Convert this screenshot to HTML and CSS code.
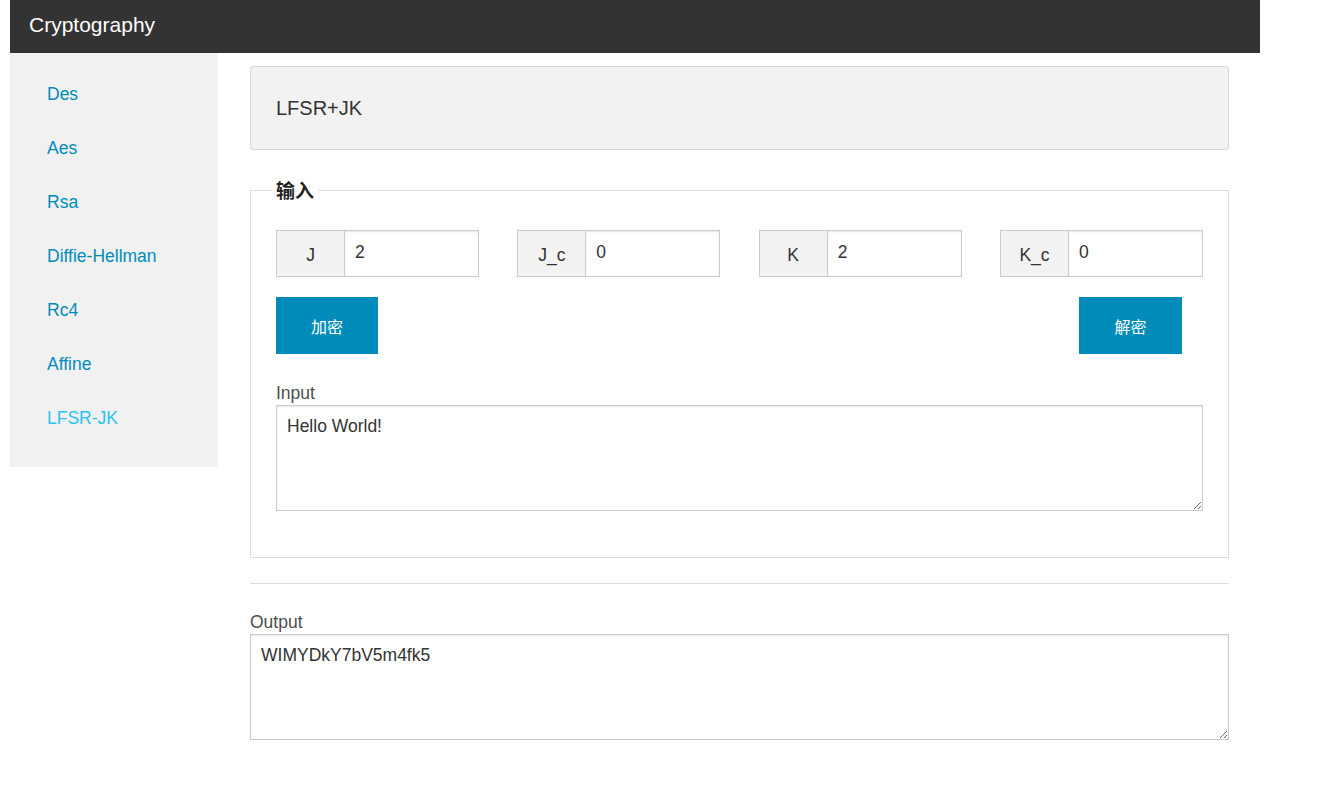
FILE: index.html
```html
<!DOCTYPE html>
<html lang="zh">
<head>
<meta charset="UTF-8">
<meta name="viewport" content="width=device-width, initial-scale=1.0">
<title>Cryptography</title>
<link rel="stylesheet" href="styles.css">
</head>
<body>

<div class="page">
    <nav class="top-bar">
        <h1>Cryptography</h1>
    </nav>

    <div class="layout">
        <ul class="side-nav">
            <li><a href="#">Des</a></li>
            <li><a href="#">Aes</a></li>
            <li><a href="#">Rsa</a></li>
            <li><a href="#">Diffie-Hellman</a></li>
            <li><a href="#">Rc4</a></li>
            <li><a href="#">Affine</a></li>
            <li class="active"><a href="#">LFSR-JK</a></li>
        </ul>

        <div class="main">
            <div class="panel">LFSR+JK</div>

            <fieldset>
                <legend>输入</legend>
                <div class="params">
                    <div class="input-group">
                        <span class="prefix">J</span>
                        <input type="text" value="2">
                    </div>
                    <div class="input-group">
                        <span class="prefix">J_c</span>
                        <input type="text" value="0">
                    </div>
                    <div class="input-group">
                        <span class="prefix">K</span>
                        <input type="text" value="2">
                    </div>
                    <div class="input-group">
                        <span class="prefix">K_c</span>
                        <input type="text" value="0">
                    </div>
                </div>
                <div class="actions">
                    <button class="button">加密</button>
                    <button class="button right">解密</button>
                </div>
                <label for="input">Input</label>
                <textarea id="input">Hello World!</textarea>
            </fieldset>

            <hr>

            <label for="output">Output</label>
            <textarea id="output">WIMYDkY7bV5m4fk5</textarea>
        </div>
    </div>
</div>

</body>
</html>
```

FILE: styles.css
```css
body {
    font-family: 'Liberation Sans', Arial, 'Noto Sans CJK SC', sans-serif;
    color: #222;
    background-color: #ffffff;
    margin: 0;
    padding: 0;
}
.page {
    width: 1250px;
    margin: 0 10px;
}
.top-bar {
    background-color: #333333;
    height: 53px;
    box-sizing: border-box;
    display: flex;
    align-items: center;
    padding: 0 19px 3px;
}
.top-bar h1 {
    margin: 0;
    color: #ffffff;
    font-size: 21px;
    font-weight: 400;
}
.layout {
    display: flex;
    align-items: flex-start;
}
.side-nav {
    width: 208px;
    flex-shrink: 0;
    list-style: none;
    margin: 0;
    padding: 14px 0 22px;
    background-color: #f1f1f1;
}
.side-nav li {
    height: 54px;
    display: flex;
    align-items: center;
    padding-left: 37px;
}
.side-nav a {
    color: #008cba;
    text-decoration: none;
    font-size: 17.5px;
}
.side-nav li.active a {
    color: #29c3f7;
}
.main {
    width: 979px;
    min-width: 0;
    margin-left: 32px;
    padding-top: 13px;
}
.panel {
    background-color: #f2f2f2;
    border: 1px solid #d8d8d8;
    border-radius: 3px;
    padding: 27px 25px;
    font-size: 20px;
    line-height: 28px;
    color: #333;
}
fieldset {
    min-width: 0;
    border: 1px solid #ddd;
    margin: 27px 0 0;
    padding: 27px 25px 46px;
}
legend {
    font-family: 'Noto Sans CJK SC', sans-serif;
    font-weight: 700;
    font-size: 19px;
    line-height: 26px;
    padding: 0 4px;
    margin-left: -4px;
    color: #222;
}
.params {
    display: grid;
    grid-template-columns: repeat(4, 203px);
    justify-content: space-between;
}
.input-group {
    display: flex;
    height: 47px;
}
.prefix {
    width: 68px;
    flex-shrink: 0;
    box-sizing: border-box;
    background-color: #f2f2f2;
    border: 1px solid #cccccc;
    border-right: none;
    display: flex;
    align-items: center;
    justify-content: center;
    padding-top: 4px;
    font-size: 17.5px;
    color: #333;
}
.input-group input {
    flex: 1;
    width: 0;
    min-width: 0;
    box-sizing: border-box;
    border: 1px solid #cccccc;
    box-shadow: inset 0 1px 2px rgba(0, 0, 0, 0.1);
    padding: 0 10px 2px;
    font-family: inherit;
    font-size: 17.5px;
    color: #333;
    outline: none;
}
.actions {
    display: flex;
    justify-content: space-between;
    margin-top: 20px;
}
.button {
    width: 102px;
    height: 57px;
    border: none;
    background-color: #008cba;
    color: #ffffff;
    font-family: 'Noto Sans CJK SC', sans-serif;
    font-size: 16px;
    cursor: pointer;
}
.button.right {
    margin-right: 21px;
    width: 103px;
}
label {
    display: block;
    font-size: 17.5px;
    color: #4d4d4d;
    line-height: 22px;
}
.actions + label {
    margin-top: 28px;
}
textarea {
    display: block;
    width: 100%;
    height: 106px;
    box-sizing: border-box;
    border: 1px solid #cccccc;
    box-shadow: inset 0 1px 2px rgba(0, 0, 0, 0.1);
    padding: 10px;
    margin: 1px 0 0;
    font-family: inherit;
    font-size: 17.5px;
    color: #333;
    resize: vertical;
    outline: none;
}
hr {
    border: none;
    border-top: 1px solid #ddd;
    margin: 25px 0 27px;
}
```
